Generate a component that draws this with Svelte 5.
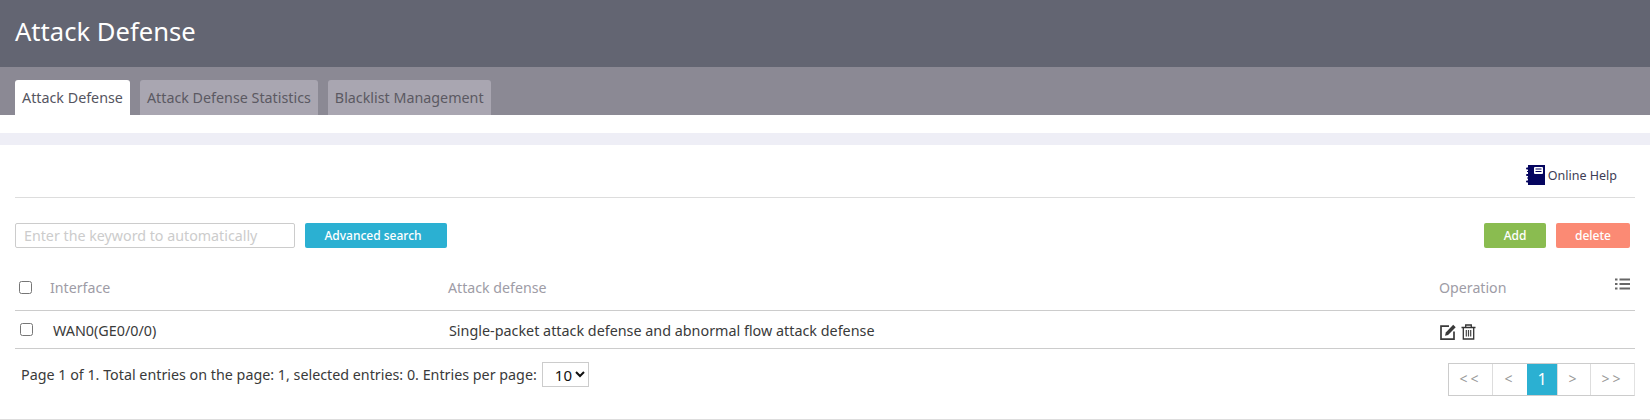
<script>
  const tabs = ['Attack Defense', 'Attack Defense Statistics', 'Blacklist Management']
  const pages = ['<<', '<', '1', '>', '>>']
</script>

<div class="page">
  <header class="title">Attack Defense</header>
  <nav class="tabs">
    {#each tabs as tab, i}
      <div class="tab" class:active={i === 0}>{tab}</div>
    {/each}
  </nav>
  <div class="band"></div>

  <main class="content">
    <div class="help">
      <svg width="19" height="20" viewBox="0 0 19 20">
        <rect x="2" y="0" width="17" height="20" fill="#05055f" />
        <rect x="8" y="2" width="9" height="7" rx="1" fill="#fff" />
        <path d="M9.5 4h6M9.5 6.500h6" stroke="#05055f" stroke-width="1" />
        <path d="M1 3.500h3M1 10h3M1 16.500h3" stroke="#05055f" stroke-width="2" stroke-linecap="round" />
        <path d="M1 6.500h1M1 13h1" stroke="#05055f" stroke-width="1" />
      </svg>
      <span>Online Help</span>
    </div>

    <div class="toolbar">
      <input class="search" type="text" placeholder="Enter the keyword to automatically" />
      <button class="btn search-btn">Advanced search</button>
      <div class="spacer"></div>
      <button class="btn add">Add</button>
      <button class="btn del">delete</button>
    </div>

    <div class="row head">
      <input class="check" type="checkbox" />
      <div class="c-name">Interface</div>
      <div class="c-def">Attack defense</div>
      <div class="c-op">Operation</div>
      <svg class="cols" width="15" height="12" viewBox="0 0 15 12">
        <path d="M0 1.500h2.500M4.500 1.500H15M0 6h2.500M4.500 6H15M0 10.500h2.500M4.500 10.500H15" stroke="#666" stroke-width="2" />
      </svg>
    </div>

    <div class="row body">
      <input class="check" type="checkbox" />
      <div class="c-name">WAN0(GE0/0/0)</div>
      <div class="c-def">Single-packet attack defense and abnormal flow attack defense</div>
      <div class="c-op icons">
        <svg width="16" height="16" viewBox="0 0 16 16">
          <path d="M9 2.200H1v13h13V7.500" fill="none" stroke="#3a3a3a" stroke-width="1.700" />
          <path d="M5 11.800l.8-3.300L13.200.8l2.500 2.500-7.600 7.700z" fill="#3a3a3a" />
        </svg>
        <svg width="15" height="16" viewBox="0 0 15 16">
          <path d="M.5 3.500h14M4.700 3.500V1h5.600v2.500M2.300 3.500V15h10.400V3.500" fill="none" stroke="#333" stroke-width="1.300" />
          <path d="M5.300 6v6.500M7.500 6v6.500M9.700 6v6.500" stroke="#444" stroke-width="1.200" />
        </svg>
      </div>
    </div>

    <div class="foot">
      <div class="summary">
        <span>Page 1 of 1. Total entries on the page: 1, selected entries: 0. Entries per page:</span>
        <select class="size"><option>10</option></select>
      </div>
      <div class="pager">
        {#each pages as p}
          <div class="pg" class:cur={p === '1'}>{p}</div>
        {/each}
      </div>
    </div>
  </main>
</div>

<style>
  :global(body) {
    margin: 0;
    background: #fff;
  }

  .page {
    width: 1650px;
    height: 420px;
    overflow: hidden;
    font-family: "Noto Sans", "Open Sans", sans-serif;
    color: #333;
    border-bottom: 1px solid #ddd;
    box-sizing: border-box;
  }

  .title {
    height: 67px;
    line-height: 64px;
    padding-left: 15px;
    background: #636572;
    color: #fff;
    font-size: 25.600px;
  }

  .tabs {
    height: 48px;
    box-sizing: border-box;
    padding: 13px 0 0 15px;
    display: flex;
    gap: 10px;
    background: #8b8994;
  }

  .tab {
    height: 35px;
    line-height: 35px;
    padding: 0 7px;
    border-radius: 3px 3px 0 0;
    background: #a9a6b1;
    color: #5b5962;
    font-size: 14.300px;
  }

  .tab.active {
    background: #fff;
    color: #55555f;
  }

  .band {
    height: 12px;
    margin-top: 18px;
    background: #eeeef6;
  }

  .content {
    padding: 0 15px;
  }

  .help {
    height: 53px;
    display: flex;
    justify-content: flex-end;
    align-items: center;
    gap: 3px;
    padding: 8px 18px 0 0;
    box-sizing: border-box;
    border-bottom: 1px solid #ddd;
    font-size: 12.500px;
    color: #3d3d55;
  }

  .toolbar {
    display: flex;
    align-items: center;
    margin-top: 24px;
    height: 26px;
  }

  .search {
    width: 280px;
    height: 25px;
    box-sizing: border-box;
    padding: 0 8px;
    border: 1px solid #ccc;
    border-radius: 2px;
    font: 14.250px "Noto Sans", sans-serif;
    outline: none;
  }

  .search::placeholder {
    color: #ccc;
  }

  .btn {
    height: 25px;
    border: 0;
    border-radius: 2px;
    color: #fff;
    font: 500 12px "Noto Sans", sans-serif;
    padding: 0;
  }

  .search-btn {
    width: 142px;
    margin-left: 10px;
    padding-right: 6px;
    background: #2bb0d2;
  }

  .spacer {
    flex: 1;
  }

  .add {
    width: 62px;
    background: #8abc50;
  }

  .del {
    width: 74px;
    margin: 0 5px 0 10px;
    background: #fb8a74;
  }

  .row {
    display: flex;
    align-items: center;
    position: relative;
    font-size: 14.200px;
  }

  .head {
    height: 63px;
    padding-top: 16px;
    box-sizing: border-box;
    border-bottom: 1px solid #ccc;
    color: #9e9ca6;
  }

  .body {
    height: 38px;
    padding-top: 2px;
    box-sizing: border-box;
    border-bottom: 1px solid #ccc;
    font-size: 14.350px;
    color: #3a3a3a;
  }

  .check {
    appearance: none;
    width: 13px;
    height: 13px;
    margin: 0 0 0 4px;
    border: 1px solid #767676;
    border-radius: 2.500px;
    background: #fff;
  }

  .body .check {
    margin: -2px 0 0 5px;
  }

  .c-name {
    width: 398px;
    margin-left: 18px;
  }

  .body .c-name {
    width: 396px;
    margin-left: 20px;
  }

  .c-def {
    width: 991px;
  }

  .c-op {
    white-space: nowrap;
  }

  .icons {
    display: flex;
    gap: 5px;
    padding-top: 3px;
  }

  .cols {
    position: absolute;
    right: 5px;
    top: 30px;
  }

  .foot {
    display: flex;
    justify-content: space-between;
    align-items: flex-start;
    padding: 13px 0 0 6px;
  }

  .summary {
    display: flex;
    align-items: center;
    gap: 5px;
    font-size: 14.300px;
    color: #3a3a3a;
  }

  .size {
    width: 47px;
    height: 25px;
    box-sizing: border-box;
    padding: 0 0 0 8px;
    border: 1px solid #ccc;
    background: #fff;
    color: #111;
    font: 15px "Noto Sans", sans-serif;
  }

  .pager {
    display: flex;
    height: 33px;
    margin-top: 1px;
    box-sizing: border-box;
    border: 1px solid #ccc;
    border-right-color: #e2e2e2;
  }

  .pg {
    box-sizing: border-box;
    height: 31px;
    line-height: 30px;
    text-align: center;
    width: 33px;
    border-left: 1px solid #ddd;
    color: #999;
    font-size: 14px;
    letter-spacing: 3px;
  }

  .pg:first-child {
    width: 43px;
    border-left: 0;
  }

  .pg:nth-child(2) {
    width: 35px;
  }

  .pg:last-child {
    width: 44px;
  }

  .pg.cur {
    width: 30px;
    border-left: 0;
    background: #2bb0d2;
    color: #fff;
    font-size: 16px;
    letter-spacing: 0;
  }
</style>
